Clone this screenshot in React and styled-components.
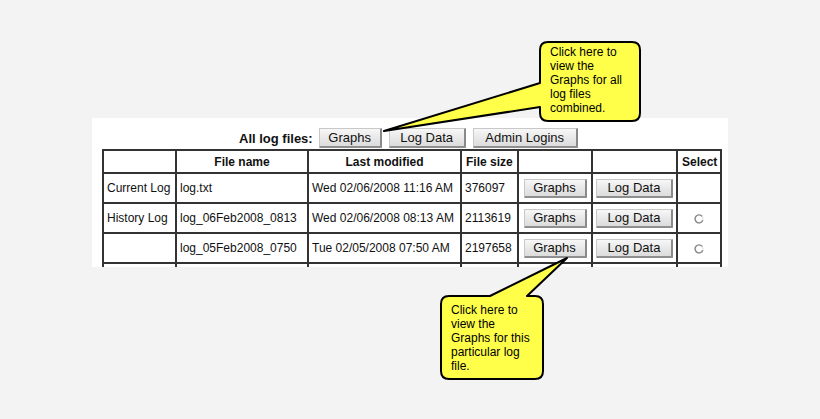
import styled, { createGlobalStyle } from "styled-components";

const GlobalStyle = createGlobalStyle`
  html, body {
    margin: 0;
    padding: 0;
    background: #f3f3f3;
  }
  body {
    font-family: "Liberation Sans", Arial, sans-serif;
    color: #111;
  }
`;

const Page = styled.div`
  position: relative;
  width: 820px;
  height: 419px;
  overflow: hidden;
  padding-top: 118px;
  padding-left: 92px;
  box-sizing: border-box;
`;

const Panel = styled.div`
  width: 636px;
  height: 149px;
  background: #ffffff;
  overflow: hidden;
  box-sizing: border-box;
  padding: 10px 0 0 10px;
`;

const Toolbar = styled.div`
  display: flex;
  align-items: center;
  gap: 7px;
  height: 20px;
  margin-left: 137px;
  margin-bottom: 1px;
`;

const ToolbarLabel = styled.span`
  font-weight: bold;
  font-size: 13px;
  margin-right: -1px;
`;

const Button = styled.button`
  font-family: "Liberation Sans", Arial, sans-serif;
  font-size: 13px;
  color: #111;
  height: ${(p) => (p.$small ? 19 : 20)}px;
  width: ${(p) => p.$w}px;
  padding: 0;
  background: linear-gradient(#f7f7f7, #e6e6e6 60%, #dcdcdc);
  border: 1px solid #c8c8c8;
  border-right: 2px solid #8a8a8a;
  border-bottom: 2px solid #8f8f8f;
  border-radius: 1px;
  cursor: pointer;
`;

const Table = styled.table`
  border-collapse: collapse;
  table-layout: fixed;
  width: 618px;
  font-size: 12px;
  border: 2px solid #2a2a2a;
`;

const Th = styled.th`
  height: 21px;
  border: 2px solid #333;
  font-weight: bold;
  text-align: ${(p) => p.$align || "center"};
  padding: 0 4px;
  font-size: 12px;
`;

const Td = styled.td`
  height: 28px;
  border: 2px solid #333;
  padding: 0 3px;
  text-align: ${(p) => p.$align || "left"};
  white-space: nowrap;
  overflow: hidden;
  vertical-align: middle;
`;

const Radio = styled.svg`
  display: inline-block;
  vertical-align: middle;
`;

const Callout = styled.svg`
  position: absolute;
  left: 0;
  top: 0;
  pointer-events: none;
`;

const CalloutText = styled.div`
  position: absolute;
  left: ${(p) => p.$x}px;
  top: ${(p) => p.$y}px;
  width: 92px;
  font-size: 12px;
  line-height: 14px;
  color: #000;
`;

const rows = [
  { kind: "Current Log", name: "log.txt", date: "Wed 02/06/2008 11:16 AM", size: "376097", radio: false, buttons: true },
  { kind: "History Log", name: "log_06Feb2008_0813", date: "Wed 02/06/2008 08:13 AM", size: "2113619", radio: true, buttons: true },
  { kind: "", name: "log_05Feb2008_0750", date: "Tue 02/05/2008 07:50 AM", size: "2197658", radio: true, buttons: true },
  { kind: "", name: "", date: "", size: "", radio: false, buttons: false },
];

function RadioIcon() {
  return (
    <Radio width="12" height="12" viewBox="0 0 12 12">
      <circle cx="6" cy="6" r="4" fill="none" stroke="#e2e2e2" strokeWidth="1.2" />
      <path d="M9.2 3.4 A4 4 0 1 0 9.8 7.2" fill="none" stroke="#8a8a8a" strokeWidth="1.4" />
    </Radio>
  );
}

export default function App() {
  return (
    <>
      <GlobalStyle />
      <Page>
        <Panel>
          <Toolbar>
            <ToolbarLabel>All log files:</ToolbarLabel>
            <Button $w={63}>Graphs</Button>
            <Button $w={77}>Log Data</Button>
            <Button $w={105}>Admin Logins</Button>
          </Toolbar>
          <Table>
            <colgroup>
              <col style={{ width: 73 }} />
              <col style={{ width: 132 }} />
              <col style={{ width: 153 }} />
              <col style={{ width: 57 }} />
              <col style={{ width: 74 }} />
              <col style={{ width: 85 }} />
              <col style={{ width: 44 }} />
            </colgroup>
            <thead>
              <tr>
                <Th></Th>
                <Th>File name</Th>
                <Th>Last modified</Th>
                <Th $align="left">File size</Th>
                <Th></Th>
                <Th></Th>
                <Th>Select</Th>
              </tr>
            </thead>
            <tbody>
              {rows.map((r, i) => (
                <tr key={i}>
                  <Td>{r.kind}</Td>
                  <Td>{r.name}</Td>
                  <Td>{r.date}</Td>
                  <Td>{r.size}</Td>
                  <Td $align="center">
                    {r.buttons && <Button $w={63} $small>Graphs</Button>}
                  </Td>
                  <Td $align="center">
                    {r.buttons && <Button $w={77} $small>Log Data</Button>}
                  </Td>
                  <Td $align="center">{r.radio && <RadioIcon />}</Td>
                </tr>
              ))}
            </tbody>
          </Table>
        </Panel>

        <Callout width="820" height="419" viewBox="0 0 820 419">
          <path
            d="M548 42 H632 Q640 42 640 50 V113 Q640 121 632 121 H548 Q540 121 540 113 V107 L384 131 L540 83 V50 Q540 42 548 42 Z"
            fill="#ffff4a"
            stroke="#000"
            strokeWidth="2"
            strokeLinejoin="round"
          />
          <path
            d="M449 296 H490 L567 258 L527 296 H535 Q543 296 543 304 V371 Q543 379 535 379 H449 Q441 379 441 371 V304 Q441 296 449 296 Z"
            fill="#ffff4a"
            stroke="#000"
            strokeWidth="2"
            strokeLinejoin="round"
          />
        </Callout>
        <CalloutText $x={550} $y={45}>
          Click here to<br />view the<br />Graphs for all<br />log files<br />combined.
        </CalloutText>
        <CalloutText $x={451} $y={303}>
          Click here to<br />view the<br />Graphs for this<br />particular log<br />file.
        </CalloutText>
      </Page>
    </>
  );
}
